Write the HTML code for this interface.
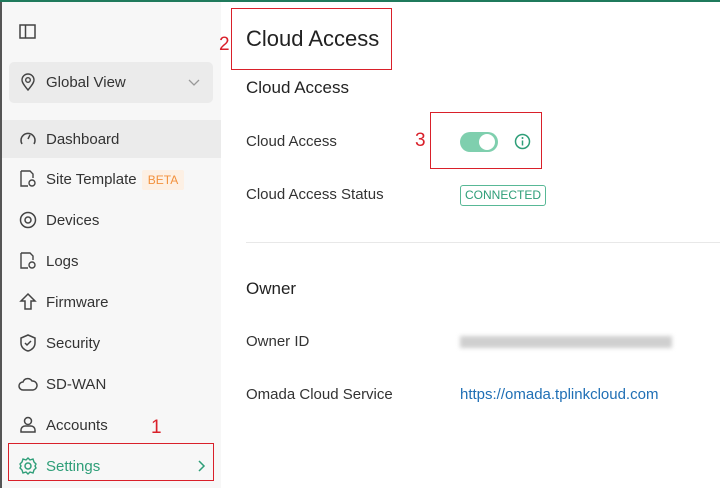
<!DOCTYPE html><html><head><style>
body{margin:0;width:720px;height:488px;overflow:hidden;font-family:"Liberation Sans",sans-serif;background:#fff;position:relative;color:#333}
.a{position:absolute}
.side{left:0;top:0;width:221px;height:488px;background:#f7f7f7;border-left:2px solid #555;box-sizing:border-box}
.top{left:0;top:0;width:720px;height:2px;background:#1f7a5c;z-index:5}
.nav{position:absolute;left:0;width:219px;height:38px;font-size:15px;color:#333;line-height:38px}
.nav span{position:absolute;left:44px;top:1px}
.nav svg{position:absolute;left:16px;top:9px}
.red{position:absolute;border:1.5px solid #d9202a}
.num{position:absolute;color:#d9202a;font-size:19px}
.lbl{font-size:15px;color:#333}
</style></head><body>
<div class="a top"></div>
<div class="a side">
 <svg class="a" style="left:17px;top:24px" width="18" height="16"><rect x="1" y="1" width="15" height="13" fill="none" stroke="#444" stroke-width="1.5"/><line x1="6.5" y1="1" x2="6.5" y2="14" stroke="#444" stroke-width="1.5"/></svg>
 <div class="a" style="left:7px;top:62px;width:204px;height:41px;background:#ebebeb;border-radius:5px"></div>
 <svg class="a" style="left:18px;top:73px" width="16" height="19"><path d="M8 17C3 11 2 9 2 7a6 6 0 0112 0c0 2-1 4-6 10z" fill="none" stroke="#444" stroke-width="1.4"/><circle cx="8" cy="7" r="2.3" fill="none" stroke="#444" stroke-width="1.4"/></svg>
 <div class="a" style="left:44px;top:74px;font-size:15px">Global View</div>
 <svg class="a" style="left:186px;top:79px" width="12" height="8"><path d="M1 1l5 5 5-5" fill="none" stroke="#999" stroke-width="1.3"/></svg>
 <div class="nav" style="top:120px;background:#ebebeb"><svg width="20" height="20"><path d="M4 15a7 7 0 1112 0" fill="none" stroke="#444" stroke-width="1.5"/><path d="M10 10l2-4" stroke="#444" stroke-width="1.5"/></svg><span>Dashboard</span></div>
 <div class="nav" style="top:160px"><svg width="20" height="20"><path d="M3 2h9l3 3v4M3 2v15h7" fill="none" stroke="#444" stroke-width="1.4"/><circle cx="14" cy="14" r="3" fill="none" stroke="#444" stroke-width="1.4"/></svg><span>Site Template</span>
  <div class="a" style="left:140px;top:10px;height:20px;width:42px;background:#fdf0e4;color:#f2913d;font-size:12px;line-height:20px;text-align:center;border-radius:2px">BETA</div></div>
 <div class="nav" style="top:201px"><svg width="20" height="20"><circle cx="10" cy="10" r="7.5" fill="none" stroke="#444" stroke-width="1.5"/><circle cx="10" cy="10" r="3" fill="none" stroke="#444" stroke-width="1.5"/></svg><span>Devices</span></div>
 <div class="nav" style="top:242px"><svg width="20" height="20"><path d="M3 2h9l3 3v4M3 2v15h7" fill="none" stroke="#444" stroke-width="1.4"/><circle cx="14" cy="14" r="3" fill="none" stroke="#444" stroke-width="1.4"/></svg><span>Logs</span></div>
 <div class="nav" style="top:283px"><svg width="20" height="20"><path d="M10 2l7 7h-4v8H7V9H3z" fill="none" stroke="#444" stroke-width="1.5"/></svg><span>Firmware</span></div>
 <div class="nav" style="top:324px"><svg width="20" height="20"><path d="M10 2l7 3v5c0 4-3 7-7 8-4-1-7-4-7-8V5z" fill="none" stroke="#444" stroke-width="1.5"/><path d="M7 10l2 2 4-4" fill="none" stroke="#444" stroke-width="1.5"/></svg><span>Security</span></div>
 <div class="nav" style="top:365px"><svg width="20" height="20"><path d="M5 16a4 4 0 010-8 5 5 0 019-1 4.5 4.5 0 011 9z" fill="none" stroke="#444" stroke-width="1.5"/></svg><span>SD-WAN</span></div>
 <div class="nav" style="top:406px"><svg width="20" height="20"><circle cx="10" cy="6" r="3.5" fill="none" stroke="#444" stroke-width="1.5"/><path d="M3 17v-2a4 4 0 014-4h6a4 4 0 014 4v2z" fill="none" stroke="#444" stroke-width="1.5"/></svg><span>Accounts</span></div>
 <div class="nav" style="top:447px;color:#2e9e78"><svg width="20" height="20"><circle cx="10" cy="10" r="3" fill="none" stroke="#2e9e78" stroke-width="1.5"/><path d="M10 2l2 2 3-1 1 3 2 2-1 2 1 2-2 2-1 3-3-1-2 2-2-2-3 1-1-3-2-2 1-2-1-2 2-2 1-3 3 1z" fill="none" stroke="#2e9e78" stroke-width="1.4"/></svg><span>Settings</span>
  <svg style="left:196px;top:13px" width="8" height="12"><path d="M1 1l5 5-5 5" fill="none" stroke="#2e9e78" stroke-width="1.5"/></svg></div>
</div>
<div class="a" style="left:246px;top:26px;font-size:22px;color:#222">Cloud Access</div>
<div class="a" style="left:246px;top:78px;font-size:17px;color:#222">Cloud Access</div>
<div class="a lbl" style="left:246px;top:133px">Cloud Access</div>
<div class="a" style="left:460px;top:132px;width:38px;height:20px;border-radius:10px;background:#7fcfae"></div>
<div class="a" style="left:479px;top:134px;width:16px;height:16px;border-radius:50%;background:#fff"></div>
<svg class="a" style="left:514px;top:133px" width="17" height="17"><circle cx="8.5" cy="8.5" r="7" fill="none" stroke="#2e9e78" stroke-width="1.5"/><line x1="8.5" y1="7.5" x2="8.5" y2="12.5" stroke="#2e9e78" stroke-width="1.5"/><circle cx="8.5" cy="5" r="1" fill="#2e9e78"/></svg>
<div class="a lbl" style="left:246px;top:186px">Cloud Access Status</div>
<div class="a" style="left:460px;top:185px;width:84px;height:19px;border:1px solid #58b896;border-radius:3px;color:#2e9e78;font-size:12px;line-height:19px;text-align:center">CONNECTED</div>
<div class="a" style="left:246px;top:242px;width:474px;height:1px;background:#e8e8e8"></div>
<div class="a" style="left:246px;top:279px;font-size:17px;color:#222">Owner</div>
<div class="a lbl" style="left:246px;top:333px">Owner ID</div>
<div class="a" style="left:460px;top:336px;width:212px;height:12px;background:#cfcfcf;filter:blur(2px)"></div>
<div class="a lbl" style="left:246px;top:386px">Omada Cloud Service</div>
<div class="a" style="left:460px;top:386px;font-size:15px;color:#1f6fb5">https://omada.tplinkcloud.com</div>
<div class="red" style="left:231px;top:8px;width:159px;height:60px"></div>
<div class="num" style="left:219px;top:34px">2</div>
<div class="red" style="left:430px;top:112px;width:110px;height:55px"></div>
<div class="num" style="left:415px;top:130px">3</div>
<div class="red" style="left:8px;top:443px;width:204px;height:36px"></div>
<div class="num" style="left:151px;top:417px">1</div>
</body></html>
